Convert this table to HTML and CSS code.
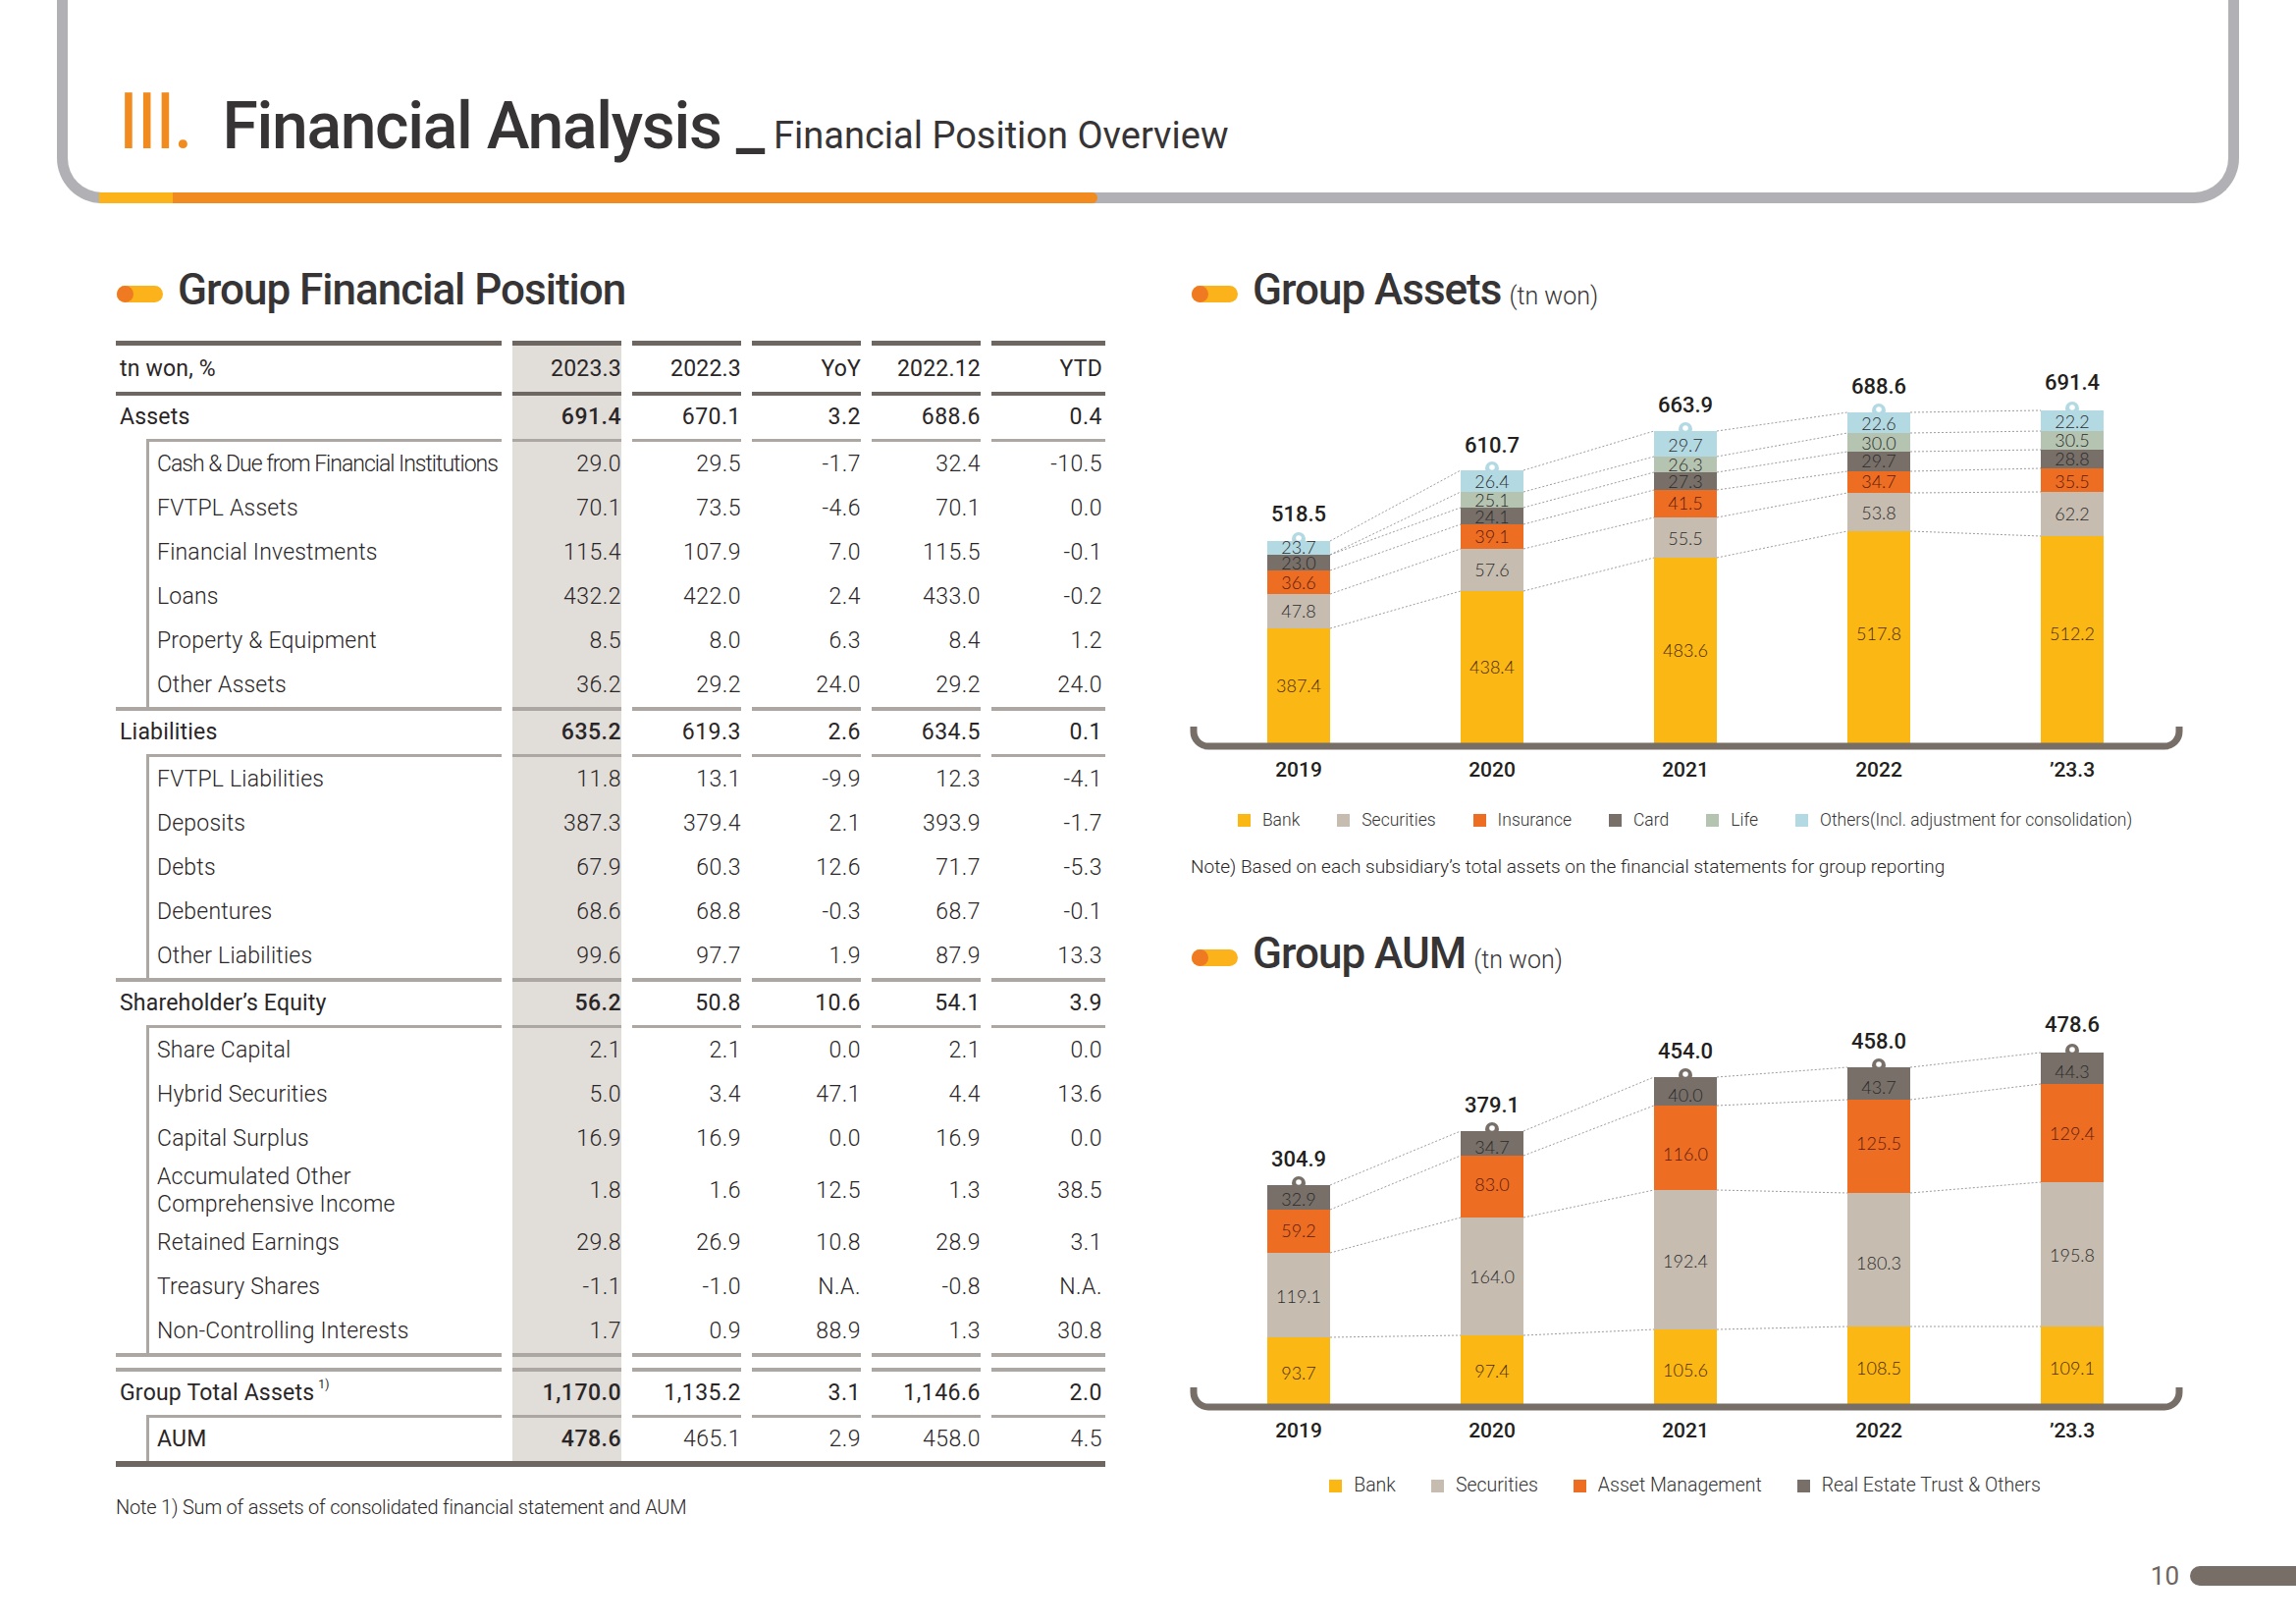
FILE: index.html
```html
<!DOCTYPE html>
<html lang="en">
<head>
<meta charset="utf-8">
<title>III. Financial Analysis _ Financial Position Overview</title>
<link rel="stylesheet" href="styles.css">
</head>
<body>
<div class="page">
  <header class="frame">
    <h1 class="title"><span class="roman">III.</span><span class="main-t">Financial Analysis _</span><span class="sub-t">Financial Position Overview</span></h1>
    <span class="frame-bar"></span>
  </header>

  <main class="content">
    <section class="col">
      <h2 class="sec-title"><span class="pill"></span>Group Financial Position</h2>
      <div class="fin">
        <div class="row hd"><div>tn won, %</div><div>2023.3</div><div>2022.3</div><div>YoY</div><div>2022.12</div><div>YTD</div></div>
        <div class="row main"><div>Assets</div><div>691.4</div><div>670.1</div><div>3.2</div><div>688.6</div><div>0.4</div></div>
        <div class="row sub first"><div class="sq">Cash &amp; Due from Financial Institutions</div><div>29.0</div><div>29.5</div><div>-1.7</div><div>32.4</div><div>-10.5</div></div>
        <div class="row sub"><div>FVTPL Assets</div><div>70.1</div><div>73.5</div><div>-4.6</div><div>70.1</div><div>0.0</div></div>
        <div class="row sub"><div>Financial Investments</div><div>115.4</div><div>107.9</div><div>7.0</div><div>115.5</div><div>-0.1</div></div>
        <div class="row sub"><div>Loans</div><div>432.2</div><div>422.0</div><div>2.4</div><div>433.0</div><div>-0.2</div></div>
        <div class="row sub"><div>Property &amp; Equipment</div><div>8.5</div><div>8.0</div><div>6.3</div><div>8.4</div><div>1.2</div></div>
        <div class="row sub"><div>Other Assets</div><div>36.2</div><div>29.2</div><div>24.0</div><div>29.2</div><div>24.0</div></div>
        <div class="row main sep"><div>Liabilities</div><div>635.2</div><div>619.3</div><div>2.6</div><div>634.5</div><div>0.1</div></div>
        <div class="row sub first"><div>FVTPL Liabilities</div><div>11.8</div><div>13.1</div><div>-9.9</div><div>12.3</div><div>-4.1</div></div>
        <div class="row sub"><div>Deposits</div><div>387.3</div><div>379.4</div><div>2.1</div><div>393.9</div><div>-1.7</div></div>
        <div class="row sub"><div>Debts</div><div>67.9</div><div>60.3</div><div>12.6</div><div>71.7</div><div>-5.3</div></div>
        <div class="row sub"><div>Debentures</div><div>68.6</div><div>68.8</div><div>-0.3</div><div>68.7</div><div>-0.1</div></div>
        <div class="row sub"><div>Other Liabilities</div><div>99.6</div><div>97.7</div><div>1.9</div><div>87.9</div><div>13.3</div></div>
        <div class="row main sep"><div>Shareholder’s Equity</div><div>56.2</div><div>50.8</div><div>10.6</div><div>54.1</div><div>3.9</div></div>
        <div class="row sub first"><div>Share Capital</div><div>2.1</div><div>2.1</div><div>0.0</div><div>2.1</div><div>0.0</div></div>
        <div class="row sub"><div>Hybrid Securities</div><div>5.0</div><div>3.4</div><div>47.1</div><div>4.4</div><div>13.6</div></div>
        <div class="row sub"><div>Capital Surplus</div><div>16.9</div><div>16.9</div><div>0.0</div><div>16.9</div><div>0.0</div></div>
        <div class="row sub tall"><div>Accumulated Other<br>Comprehensive Income</div><div>1.8</div><div>1.6</div><div>12.5</div><div>1.3</div><div>38.5</div></div>
        <div class="row sub"><div>Retained Earnings</div><div>29.8</div><div>26.9</div><div>10.8</div><div>28.9</div><div>3.1</div></div>
        <div class="row sub"><div>Treasury Shares</div><div>-1.1</div><div>-1.0</div><div>N.A.</div><div>-0.8</div><div>N.A.</div></div>
        <div class="row sub"><div>Non-Controlling Interests</div><div>1.7</div><div>0.9</div><div>88.9</div><div>1.3</div><div>30.8</div></div>
        <div class="row gap"><div></div><div></div><div></div><div></div><div></div><div></div></div>
        <div class="row main sep"><div>Group Total Assets<sup class="fn">1)</sup></div><div>1,170.0</div><div>1,135.2</div><div>3.1</div><div>1,146.6</div><div>2.0</div></div>
        <div class="row sub first aum"><div>AUM</div><div>478.6</div><div>465.1</div><div>2.9</div><div>458.0</div><div>4.5</div></div>
      </div>
      <p class="fin-note">Note 1) Sum of assets of consolidated financial statement and AUM</p>
    </section>

    <section class="col">
      <h2 class="sec-title"><span class="pill"></span>Group Assets<small>(tn won)</small></h2>
      <svg class="chart" width="1007" height="470" viewBox="1213 330 1007 470">
        <g class="dot">
          <line x1="1355" y1="548" x2="1488" y2="476"/><line x1="1355" y1="562" x2="1488" y2="498"/><line x1="1355" y1="562" x2="1488" y2="514"/><line x1="1355" y1="578" x2="1488" y2="531"/><line x1="1355" y1="602" x2="1488" y2="556"/><line x1="1355" y1="637" x2="1488" y2="599"/>
          <line x1="1552" y1="476" x2="1685" y2="436"/><line x1="1552" y1="498" x2="1685" y2="462"/><line x1="1552" y1="514" x2="1685" y2="478"/><line x1="1552" y1="531" x2="1685" y2="496"/><line x1="1552" y1="556" x2="1685" y2="524"/><line x1="1552" y1="599" x2="1685" y2="565"/>
          <line x1="1749" y1="436" x2="1882" y2="417"/><line x1="1749" y1="462" x2="1882" y2="438"/><line x1="1749" y1="478" x2="1882" y2="457"/><line x1="1749" y1="496" x2="1882" y2="477"/><line x1="1749" y1="524" x2="1882" y2="499"/><line x1="1749" y1="565" x2="1882" y2="538"/>
          <line x1="1946" y1="417" x2="2079" y2="415"/><line x1="1946" y1="438" x2="2079" y2="436"/><line x1="1946" y1="457" x2="2079" y2="455"/><line x1="1946" y1="477" x2="2079" y2="474"/><line x1="1946" y1="499" x2="2079" y2="498"/><line x1="1946" y1="538" x2="2079" y2="543"/>
        </g>
        <g>
          <circle class="f-oth" cx="1323" cy="546" r="7"/><circle class="f-w" cx="1323" cy="545" r="2.8"/>
          <rect class="f-oth" x="1291" y="548" width="64" height="14"/>
          <rect class="f-card" x="1291" y="562" width="64" height="16"/>
          <rect class="f-ins" x="1291" y="578" width="64" height="24"/>
          <rect class="f-sec" x="1291" y="602" width="64" height="35"/>
          <rect class="f-bank" x="1291" y="637" width="64" height="117"/>

          <circle class="f-oth" cx="1520" cy="474" r="7"/><circle class="f-w" cx="1520" cy="473" r="2.8"/>
          <rect class="f-oth" x="1488" y="476" width="64" height="22"/>
          <rect class="f-life" x="1488" y="498" width="64" height="16"/>
          <rect class="f-card" x="1488" y="514" width="64" height="17"/>
          <rect class="f-ins" x="1488" y="531" width="64" height="25"/>
          <rect class="f-sec" x="1488" y="556" width="64" height="43"/>
          <rect class="f-bank" x="1488" y="599" width="64" height="155"/>

          <circle class="f-oth" cx="1717" cy="434" r="7"/><circle class="f-w" cx="1717" cy="433" r="2.8"/>
          <rect class="f-oth" x="1685" y="436" width="64" height="26"/>
          <rect class="f-life" x="1685" y="462" width="64" height="16"/>
          <rect class="f-card" x="1685" y="478" width="64" height="18"/>
          <rect class="f-ins" x="1685" y="496" width="64" height="28"/>
          <rect class="f-sec" x="1685" y="524" width="64" height="41"/>
          <rect class="f-bank" x="1685" y="565" width="64" height="189"/>

          <circle class="f-oth" cx="1914" cy="415" r="7"/><circle class="f-w" cx="1914" cy="414" r="2.8"/>
          <rect class="f-oth" x="1882" y="417" width="64" height="21"/>
          <rect class="f-life" x="1882" y="438" width="64" height="19"/>
          <rect class="f-card" x="1882" y="457" width="64" height="20"/>
          <rect class="f-ins" x="1882" y="477" width="64" height="22"/>
          <rect class="f-sec" x="1882" y="499" width="64" height="39"/>
          <rect class="f-bank" x="1882" y="538" width="64" height="216"/>

          <circle class="f-oth" cx="2111" cy="413" r="7"/><circle class="f-w" cx="2111" cy="412" r="2.8"/>
          <rect class="f-oth" x="2079" y="415" width="64" height="21"/>
          <rect class="f-life" x="2079" y="436" width="64" height="19"/>
          <rect class="f-card" x="2079" y="455" width="64" height="19"/>
          <rect class="f-ins" x="2079" y="474" width="64" height="24"/>
          <rect class="f-sec" x="2079" y="498" width="64" height="45"/>
          <rect class="f-bank" x="2079" y="543" width="64" height="211"/>
        </g>
        <path class="axis" d="M1216 737 V742 A15 15 0 0 0 1231 757 H2205 A15 15 0 0 0 2220 742 V737"/>
        <g class="seg">
          <text x="1323" y="561">23.7</text><text x="1323" y="577">23.0</text><text class="t-ins" x="1323" y="596.5">36.6</text><text x="1323" y="626">47.8</text><text class="t-bank" x="1323" y="702">387.4</text>
          <text x="1520" y="494">26.4</text><text x="1520" y="512.5">25.1</text><text x="1520" y="529.5">24.1</text><text class="t-ins" x="1520" y="549.5">39.1</text><text x="1520" y="583.5">57.6</text><text class="t-bank" x="1520" y="683">438.4</text>
          <text x="1717" y="456.5">29.7</text><text x="1717" y="476.5">26.3</text><text x="1717" y="494">27.3</text><text class="t-ins" x="1717" y="516">41.5</text><text x="1717" y="551.5">55.5</text><text class="t-bank" x="1717" y="665.5">483.6</text>
          <text x="1914" y="434.5">22.6</text><text x="1914" y="454.5">30.0</text><text x="1914" y="472.5">29.7</text><text class="t-ins" x="1914" y="494">34.7</text><text x="1914" y="525.5">53.8</text><text class="t-bank" x="1914" y="648.5">517.8</text>
          <text x="2111" y="432.5">22.2</text><text x="2111" y="451.5">30.5</text><text x="2111" y="471">28.8</text><text class="t-ins" x="2111" y="493.5">35.5</text><text x="2111" y="527">62.2</text><text class="t-bank" x="2111" y="648.5">512.2</text>
        </g>
        <g class="tot">
          <text x="1323" y="528">518.5</text><text x="1520" y="458">610.7</text><text x="1717" y="417">663.9</text><text x="1914" y="398">688.6</text><text x="2111" y="394">691.4</text>
        </g>
        <g class="yr">
          <text x="1323" y="788">2019</text><text x="1520" y="788">2020</text><text x="1717" y="788">2021</text><text x="1914" y="788">2022</text><text x="2111" y="788">’23.3</text>
        </g>
      </svg>
      <ul class="legend l1">
        <li class="lg-bank">Bank</li>
        <li class="lg-sec">Securities</li>
        <li class="lg-ins">Insurance</li>
        <li class="lg-card">Card</li>
        <li class="lg-life">Life</li>
        <li class="lg-oth">Others(Incl. adjustment for consolidation)</li>
      </ul>
      <p class="note">Note) Based on each subsidiary’s total assets on the financial statements for group reporting</p>

      <h2 class="sec-title aum-t"><span class="pill"></span>Group AUM<small>(tn won)</small></h2>
      <svg class="chart aum-c" width="1007" height="479" viewBox="1213 996 1007 479">
        <g class="dot">
          <line x1="1355" y1="1204" x2="1488" y2="1149"/><line x1="1355" y1="1229" x2="1488" y2="1174"/><line x1="1355" y1="1273" x2="1488" y2="1237"/><line x1="1355" y1="1359" x2="1488" y2="1357"/>
          <line x1="1552" y1="1149" x2="1685" y2="1094"/><line x1="1552" y1="1174" x2="1685" y2="1123"/><line x1="1552" y1="1237" x2="1685" y2="1209"/><line x1="1552" y1="1357" x2="1685" y2="1351"/>
          <line x1="1749" y1="1094" x2="1882" y2="1084"/><line x1="1749" y1="1123" x2="1882" y2="1117"/><line x1="1749" y1="1209" x2="1882" y2="1212"/><line x1="1749" y1="1351" x2="1882" y2="1348"/>
          <line x1="1946" y1="1084" x2="2079" y2="1069"/><line x1="1946" y1="1117" x2="2079" y2="1101"/><line x1="1946" y1="1212" x2="2079" y2="1201"/><line x1="1946" y1="1348" x2="2079" y2="1348"/>
        </g>
        <g>
          <circle class="f-card" cx="1323" cy="1202" r="7"/><circle class="f-w" cx="1323" cy="1201" r="2.8"/>
          <rect class="f-card" x="1291" y="1204" width="64" height="25"/>
          <rect class="f-ins" x="1291" y="1229" width="64" height="44"/>
          <rect class="f-sec" x="1291" y="1273" width="64" height="86"/>
          <rect class="f-bank" x="1291" y="1359" width="64" height="68"/>

          <circle class="f-card" cx="1520" cy="1147" r="7"/><circle class="f-w" cx="1520" cy="1146" r="2.8"/>
          <rect class="f-card" x="1488" y="1149" width="64" height="25"/>
          <rect class="f-ins" x="1488" y="1174" width="64" height="63"/>
          <rect class="f-sec" x="1488" y="1237" width="64" height="120"/>
          <rect class="f-bank" x="1488" y="1357" width="64" height="70"/>

          <circle class="f-card" cx="1717" cy="1092" r="7"/><circle class="f-w" cx="1717" cy="1091" r="2.8"/>
          <rect class="f-card" x="1685" y="1094" width="64" height="29"/>
          <rect class="f-ins" x="1685" y="1123" width="64" height="86"/>
          <rect class="f-sec" x="1685" y="1209" width="64" height="142"/>
          <rect class="f-bank" x="1685" y="1351" width="64" height="76"/>

          <circle class="f-card" cx="1914" cy="1082" r="7"/><circle class="f-w" cx="1914" cy="1081" r="2.8"/>
          <rect class="f-card" x="1882" y="1084" width="64" height="33"/>
          <rect class="f-ins" x="1882" y="1117" width="64" height="95"/>
          <rect class="f-sec" x="1882" y="1212" width="64" height="136"/>
          <rect class="f-bank" x="1882" y="1348" width="64" height="79"/>

          <circle class="f-card" cx="2111" cy="1067" r="7"/><circle class="f-w" cx="2111" cy="1066" r="2.8"/>
          <rect class="f-card" x="2079" y="1069" width="64" height="32"/>
          <rect class="f-ins" x="2079" y="1101" width="64" height="100"/>
          <rect class="f-sec" x="2079" y="1201" width="64" height="147"/>
          <rect class="f-bank" x="2079" y="1348" width="64" height="79"/>
        </g>
        <path class="axis" d="M1216 1410 V1415 A15 15 0 0 0 1231 1430 H2205 A15 15 0 0 0 2220 1415 V1410"/>
        <g class="seg">
          <text x="1323" y="1224.5">32.9</text><text class="t-ins" x="1323" y="1256.5">59.2</text><text x="1323" y="1323.5">119.1</text><text class="t-bank" x="1323" y="1401.5">93.7</text>
          <text x="1520" y="1171.5">34.7</text><text class="t-ins" x="1520" y="1209.5">83.0</text><text x="1520" y="1303.5">164.0</text><text class="t-bank" x="1520" y="1399.5">97.4</text>
          <text x="1717" y="1118.5">40.0</text><text class="t-ins" x="1717" y="1178.5">116.0</text><text x="1717" y="1287.5">192.4</text><text class="t-bank" x="1717" y="1398.5">105.6</text>
          <text x="1914" y="1110.5">43.7</text><text class="t-ins" x="1914" y="1167.5">125.5</text><text x="1914" y="1289.5">180.3</text><text class="t-bank" x="1914" y="1396.5">108.5</text>
          <text x="2111" y="1094.5">44.3</text><text class="t-ins" x="2111" y="1157.5">129.4</text><text x="2111" y="1281.5">195.8</text><text class="t-bank" x="2111" y="1396.5">109.1</text>
        </g>
        <g class="tot">
          <text x="1323" y="1185">304.9</text><text x="1520" y="1130">379.1</text><text x="1717" y="1075">454.0</text><text x="1914" y="1065">458.0</text><text x="2111" y="1048">478.6</text>
        </g>
        <g class="yr">
          <text x="1323" y="1461">2019</text><text x="1520" y="1461">2020</text><text x="1717" y="1461">2021</text><text x="1914" y="1461">2022</text><text x="2111" y="1461">’23.3</text>
        </g>
      </svg>
      <ul class="legend l2">
        <li class="lg-bank">Bank</li>
        <li class="lg-sec">Securities</li>
        <li class="lg-ins">Asset Management</li>
        <li class="lg-card">Real Estate Trust &amp; Others</li>
      </ul>
    </section>
  </main>

  <footer class="foot">
    <span class="pg">10</span>
    <span class="pg-bar"></span>
  </footer>
</div>
</body>
</html>
```

FILE: styles.css
```css
* { box-sizing: border-box; }

html, body {
  margin: 0;
  padding: 0;
  background: #ffffff;
}

body {
  width: 2339px;
  height: 1654px;
  overflow: hidden;
  font-family: Roboto, "Liberation Sans", sans-serif;
  color: #231f20;
}

/* ---------- header frame ---------- */
.frame {
  position: relative;
  width: 2223px;
  height: 207px;
  margin-left: 58px;
  border: 11px solid #b1b1b5;
  border-top: 0;
  border-radius: 0 0 46px 46px;
  padding: 84px 0 0 51px;
}

.title {
  margin: 0;
  display: flex;
  align-items: baseline;
  font-weight: 500;
  line-height: 1;
  color: #373435;
  white-space: nowrap;
}

.roman {
  font-size: 80px;
  font-weight: 400;
  color: #f28b1f;
  letter-spacing: -3px;
  margin-right: 32px;
}

.main-t {
  font-size: 66px;
  letter-spacing: -1.3px;
}

.sub-t {
  font-size: 38px;
  font-weight: 400;
  margin-left: 10px;
}

.frame-bar {
  position: absolute;
  left: 32px;
  bottom: -11px;
  width: 1017px;
  height: 11px;
  background: linear-gradient(90deg, #fbb21b 0 75px, #f18a1f 75px);
  border-radius: 0 6px 6px 0;
}

/* ---------- content ---------- */
.content {
  display: grid;
  grid-template-columns: 1008px 1007px;
  column-gap: 87px;
  padding-left: 118px;
  margin-top: 60px;
}

.sec-title {
  margin: 0;
  height: 56px;
  display: flex;
  align-items: baseline;
  font-size: 44px;
  font-weight: 500;
  letter-spacing: -1px;
  line-height: 56px;
  color: #373435;
  white-space: nowrap;
}

.sec-title small {
  font-size: 25px;
  font-weight: 300;
  letter-spacing: 0;
  line-height: 1;
  margin-left: 8px;
}

.aum-t { margin-top: 48px; }

.pill {
  position: relative;
  align-self: center;
  flex: none;
  width: 47px;
  height: 17px;
  margin: 8px 15px 0 1px;
  border-radius: 9px;
  background: #fbb21b;
}

.pill::before {
  content: "";
  position: absolute;
  left: 0;
  top: 0;
  width: 17px;
  height: 17px;
  border-radius: 50%;
  background: #f07a22;
}

/* ---------- table ---------- */
.fin {
  margin-top: 24px;
  display: grid;
  grid-template-columns: 393px repeat(4, 111px) 116px;
  column-gap: 11px;
  border-bottom: 6px solid #6d6661;
}

.row { display: contents; }

.row > div {
  box-sizing: content-box;
  height: 45px;
  display: flex;
  align-items: center;
  justify-content: flex-end;
  font-size: 23px;
  font-weight: 300;
  letter-spacing: 0.5px;
  line-height: 1.2;
  color: #2a2627;
  white-space: nowrap;
}

.row > div:first-child {
  justify-content: flex-start;
  padding-left: 4px;
  letter-spacing: 0.2px;
}

.row > div:nth-child(2) { background: #e1ddd8; }
.row > div:last-child { padding-right: 3px; }

.hd > div {
  height: 47px;
  border-top: 5px solid #6d6661;
  border-bottom: 4px solid #6d6661;
  font-weight: 400;
  letter-spacing: 0.2px;
}

.main > div {
  height: 44px;
  font-weight: 400;
}

.main > div:nth-child(2),
.aum > div:nth-child(2) { font-weight: 500; }

.sep > div { border-top: 4px solid #aca7a2; }

.sub > div:first-child {
  margin-left: 31px;
  border-left: 3px solid #aca7a2;
  padding-left: 8px;
}

.sub > div.sq { letter-spacing: -1px; }

.first > div { border-top: 3px solid #aca7a2; }

.tall > div { height: 61px; }
.tall > div:first-child {
  white-space: normal;
  line-height: 28px;
}

.gap > div {
  height: 11px;
  border-top: 4px solid #aca7a2;
}

.aum > div { height: 44px; }
.aum > div:first-child { font-weight: 400; }

.fn {
  font-size: 12px;
  align-self: flex-start;
  margin: 6px 0 0 4px;
}

.fin-note {
  margin: 28px 0 0;
  font-size: 20px;
  font-weight: 300;
  line-height: 26px;
  letter-spacing: -0.2px;
  color: #2a2627;
}

/* ---------- charts ---------- */
.chart {
  display: block;
  margin-top: 10px;
  overflow: visible;
}

.chart.aum-c { margin-top: 0; }

.dot line {
  stroke: #9d9d9d;
  stroke-width: 1;
  stroke-dasharray: 2 2;
}

.axis {
  fill: none;
  stroke: #766e67;
  stroke-width: 7;
}

.f-bank { fill: #fbb714; }
.f-sec  { fill: #c6bcb0; }
.f-ins  { fill: #ed6d23; }
.f-card { fill: #776f68; }
.f-life { fill: #b5c4b1; }
.f-oth  { fill: #b3d9e3; }
.f-w    { fill: #ffffff; }

.seg text {
  font-family: Lato, Roboto, sans-serif;
  font-size: 18px;
  font-weight: 300;
  fill: #2b2b2b;
  text-anchor: middle;
}

.seg .t-bank { fill: #4d2a0c; }
.seg .t-ins  { fill: #5c1b0c; }

.tot text {
  font-family: Roboto, sans-serif;
  font-size: 22px;
  font-weight: 500;
  fill: #231f20;
  text-anchor: middle;
}

.yr text {
  font-family: Roboto, sans-serif;
  font-size: 21px;
  font-weight: 500;
  fill: #231f20;
  text-anchor: middle;
}

/* ---------- legends ---------- */
.legend {
  list-style: none;
  margin: 20px 0 0;
  padding: 0;
  display: flex;
  justify-content: center;
  gap: 38px;
  font-size: 17.5px;
  font-weight: 300;
  line-height: 24px;
  color: #333333;
}

.legend li {
  display: flex;
  align-items: center;
  gap: 12px;
}

.legend li::before {
  content: "";
  width: 13px;
  height: 13px;
  flex: none;
}

.legend.l2 {
  margin-top: 23px;
  gap: 36px;
  font-size: 19.5px;
}

.lg-bank::before { background: #fbb714; }
.lg-sec::before  { background: #c6bcb0; }
.lg-ins::before  { background: #ed6d23; }
.lg-card::before { background: #776f68; }
.lg-life::before { background: #b5c4b1; }
.lg-oth::before  { background: #b3d9e3; }

.note {
  margin: 24px 0 0;
  font-size: 19px;
  font-weight: 300;
  line-height: 24px;
  color: #2a2627;
}

/* ---------- footer ---------- */
.foot {
  display: flex;
  justify-content: flex-end;
  align-items: center;
  gap: 11px;
  margin-top: 44px;
}

.pg {
  font-size: 26px;
  line-height: 26px;
  color: #6e6660;
}

.pg-bar {
  width: 108px;
  height: 20px;
  background: #766e67;
  border-radius: 10px 0 0 10px;
}
```
